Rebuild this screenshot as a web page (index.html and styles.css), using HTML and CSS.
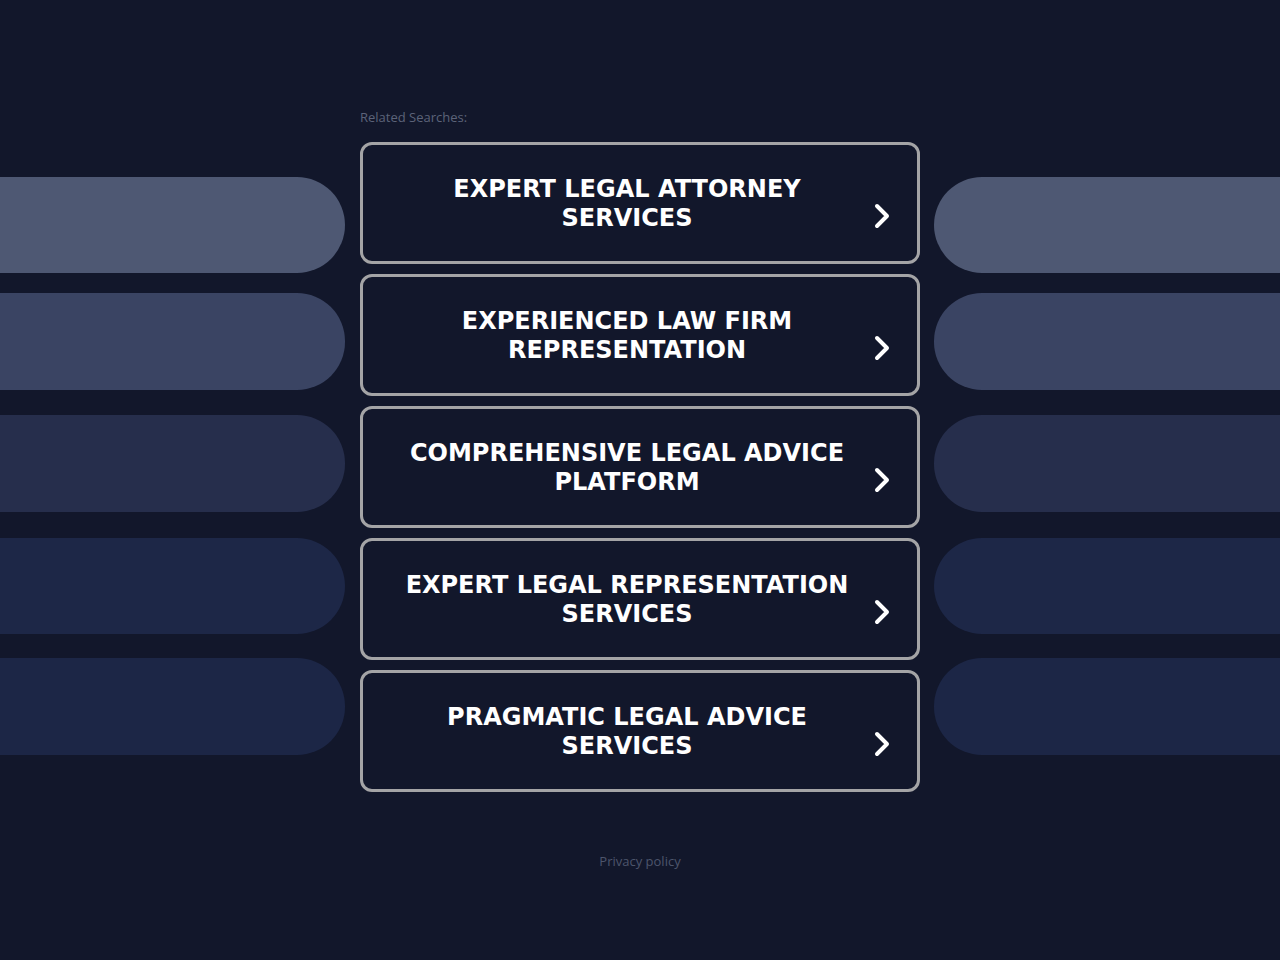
FILE: index.html
```html
<!DOCTYPE html>
<html lang="en">
<head>
<meta charset="utf-8">
<title>Related Searches</title>
<link rel="stylesheet" href="styles.css">
</head>
<body>
<div class="page">
  <div class="side side-left">
    <div class="pill p1"></div>
    <div class="pill p2"></div>
    <div class="pill p3"></div>
    <div class="pill p4"></div>
    <div class="pill p5"></div>
  </div>
  <main class="center">
    <div class="label">Related Searches:</div>
    <div class="cards">
      <a class="card" href="#"><span class="card-text">EXPERT LEGAL ATTORNEY SERVICES</span><svg class="chev" viewBox="0 0 18 28" width="18" height="28"><path d="M4 4 L14 14 L4 24" fill="none" stroke="#fff" stroke-width="4" stroke-linecap="round" stroke-linejoin="round"/></svg></a>
      <a class="card" href="#"><span class="card-text">EXPERIENCED LAW FIRM REPRESENTATION</span><svg class="chev" viewBox="0 0 18 28" width="18" height="28"><path d="M4 4 L14 14 L4 24" fill="none" stroke="#fff" stroke-width="4" stroke-linecap="round" stroke-linejoin="round"/></svg></a>
      <a class="card" href="#"><span class="card-text">COMPREHENSIVE LEGAL ADVICE PLATFORM</span><svg class="chev" viewBox="0 0 18 28" width="18" height="28"><path d="M4 4 L14 14 L4 24" fill="none" stroke="#fff" stroke-width="4" stroke-linecap="round" stroke-linejoin="round"/></svg></a>
      <a class="card" href="#"><span class="card-text">EXPERT LEGAL REPRESENTATION SERVICES</span><svg class="chev" viewBox="0 0 18 28" width="18" height="28"><path d="M4 4 L14 14 L4 24" fill="none" stroke="#fff" stroke-width="4" stroke-linecap="round" stroke-linejoin="round"/></svg></a>
      <a class="card" href="#"><span class="card-text">PRAGMATIC LEGAL ADVICE SERVICES</span><svg class="chev" viewBox="0 0 18 28" width="18" height="28"><path d="M4 4 L14 14 L4 24" fill="none" stroke="#fff" stroke-width="4" stroke-linecap="round" stroke-linejoin="round"/></svg></a>
    </div>
    <div class="footer"><a href="#">Privacy policy</a></div>
  </main>
  <div class="side side-right">
    <div class="pill p1"></div>
    <div class="pill p2"></div>
    <div class="pill p3"></div>
    <div class="pill p4"></div>
    <div class="pill p5"></div>
  </div>
</div>
</body>
</html>
```
FILE: styles.css
```css
html, body {
  margin: 0;
  padding: 0;
  background: #12172b;
  height: 100%;
}
body {
  font-family: "DejaVu Sans", "Liberation Sans", sans-serif;
}
.page {
  display: grid;
  grid-template-columns: 345px 560px 1fr;
  column-gap: 15px;
  min-height: 960px;
}
.side-right {
  margin-left: -1px;
}
.side {
  display: flex;
  flex-direction: column;
  padding-top: 177px;
}
.pill {
  height: 96px;
}
.side-left .pill {
  border-radius: 0 48px 48px 0;
}
.side-right .pill {
  border-radius: 48px 0 0 48px;
}
.p1 { background: #4e5873; }
.p2 { background: #3a4463; margin-top: 20px; height: 97px; }
.p3 { background: #262e4c; margin-top: 25px; height: 97px; }
.p4 { background: #1d2747; margin-top: 26px; }
.p5 { background: #1c2646; margin-top: 24px; height: 97px; }

.center {
  padding-top: 109px;
  display: flex;
  flex-direction: column;
}
.label {
  font-family: "Open Sans", "Liberation Sans", sans-serif;
  font-size: 13px;
  line-height: 16px;
  color: #5c6379;
  margin-bottom: 17px;
}
.cards {
  display: flex;
  flex-direction: column;
  gap: 10px;
}
.card {
  box-sizing: border-box;
  height: 122px;
  border: 3px solid #a4a4a6;
  border-radius: 12px;
  display: flex;
  align-items: center;
  text-decoration: none;
  padding: 0 26px 0 37px;
}
.card-text {
  width: 454px;
  flex: none;
  text-align: center;
  color: #ffffff;
  font-weight: bold;
  font-size: 24px;
  line-height: 29px;
  padding-top: 2px;
}
.chev {
  flex: none;
  margin-left: 19px;
  margin-top: 26px;
}
.footer {
  margin-top: 61px;
  text-align: center;
  font-family: "Open Sans", "Liberation Sans", sans-serif;
  font-size: 13px;
  line-height: 16px;
}
.footer a {
  color: #4d556b;
  text-decoration: none;
}
```
